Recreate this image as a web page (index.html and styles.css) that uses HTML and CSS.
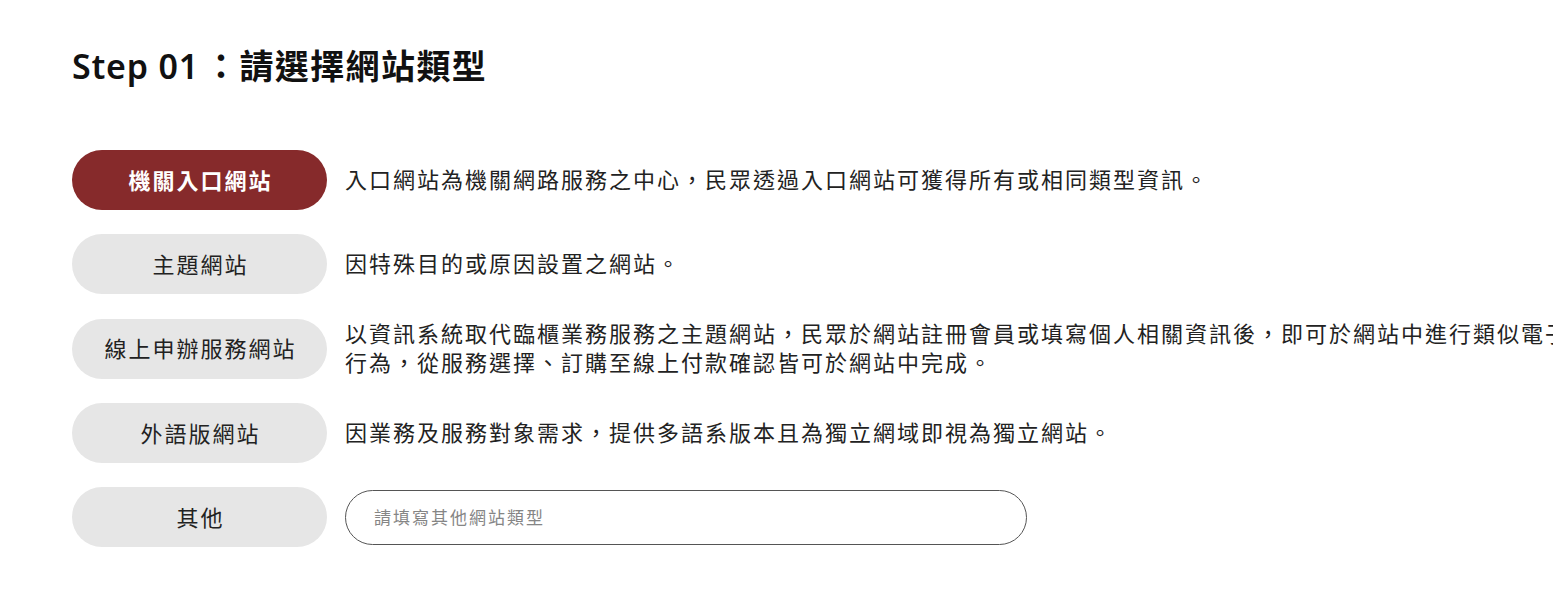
FILE: index.html
```html
<!DOCTYPE html>
<html lang="zh-Hant">
<head>
<meta charset="utf-8">
<title>Step 01：請選擇網站類型</title>
<link rel="stylesheet" href="styles.css">
</head>
<body>
<main class="page">
  <h1 class="title"><span class="step">Step 01</span>：請選擇網站類型</h1>
  <div class="options">
    <div class="row">
      <button class="opt active" type="button">機關入口網站</button>
      <p class="desc">入口網站為機關網路服務之中心，民眾透過入口網站可獲得所有或相同類型資訊。</p>
    </div>
    <div class="row">
      <button class="opt" type="button">主題網站</button>
      <p class="desc">因特殊目的或原因設置之網站。</p>
    </div>
    <div class="row">
      <button class="opt" type="button">線上申辦服務網站</button>
      <p class="desc">以資訊系統取代臨櫃業務服務之主題網站，民眾於網站註冊會員或填寫個人相關資訊後，即可於網站中進行類似電子商務行為，從服務選擇、訂購至線上付款確認皆可於網站中完成。</p>
    </div>
    <div class="row">
      <button class="opt" type="button">外語版網站</button>
      <p class="desc">因業務及服務對象需求，提供多語系版本且為獨立網域即視為獨立網站。</p>
    </div>
    <div class="row">
      <button class="opt" type="button">其他</button>
      <input class="other" type="text" placeholder="請填寫其他網站類型">
    </div>
  </div>
</main>
</body>
</html>
```

FILE: styles.css
```css
html, body {
  margin: 0;
  padding: 0;
  background: #fff;
  overflow: hidden;
}
body {
  font-family: "Noto Sans", "Noto Sans CJK TC", sans-serif;
  color: #222;
}
.page {
  padding: 41px 0 40px 72px;
}
.title {
  margin: 0;
  font-size: 34px;
  line-height: 51px;
  font-weight: 700;
  letter-spacing: 1.4px;
  color: #111;
  font-family: "Noto Sans", "Noto Sans CJK TC", sans-serif;
}
.title .step {
  font-weight: 600;
  letter-spacing: 0.8px;
  margin-right: 5px;
}
.options {
  margin-top: 58px;
  display: flex;
  flex-direction: column;
  gap: 24px;
}
.row {
  display: flex;
  align-items: center;
  gap: 18px;
  min-height: 60px;
}
.opt {
  flex: 0 0 255px;
  height: 60px;
  border: 0;
  border-radius: 30px;
  background: #e6e6e6;
  color: #222;
  font-family: "Noto Sans CJK TC", sans-serif;
  font-size: 22px;
  letter-spacing: 2px;
  padding: 0 0 3px 2px;
  font-weight: 400;
}
.opt.active {
  background: #862a2b;
  color: #fff;
  font-weight: 700;
}
.desc {
  flex: 0 0 1286px;
  margin: 0;
  padding-bottom: 3px;
  font-family: "Noto Sans CJK TC", sans-serif;
  font-size: 22px;
  letter-spacing: 2px;
  line-height: 29px;
  color: #222;
}
.other {
  flex: 0 0 682px;
  box-sizing: border-box;
  height: 55px;
  border: 1px solid #555;
  border-radius: 28px;
  padding: 0 0 2px 28px;
  font-family: "Noto Sans CJK TC", sans-serif;
  font-size: 17px;
  letter-spacing: 2px;
  background: #fff;
  outline: none;
}
.other::placeholder {
  color: #858585;
}
```
